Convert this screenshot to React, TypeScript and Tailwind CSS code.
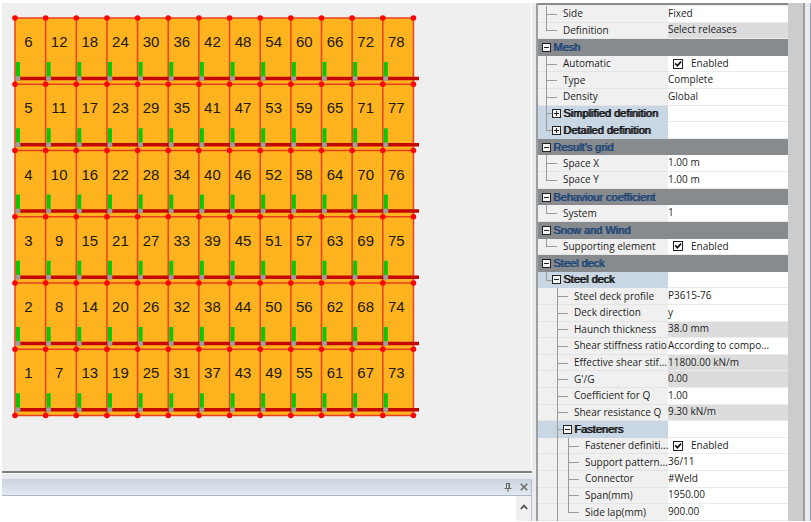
import React, { useState } from 'react';
import clsx from 'clsx';

type RowKind = 'section' | 'group' | 'item';

interface PropertyRow {
  kind: RowKind;
  level: number;
  label: string;
  value?: string;
  checkbox?: boolean;
  readOnly?: boolean;
  collapsed?: boolean;
  last?: boolean;
}

const rows: PropertyRow[] = [
  { kind: 'item', level: 1, label: 'Side', value: 'Fixed' },
  { kind: 'item', level: 1, label: 'Definition', value: 'Select releases', readOnly: true, last: true },
  { kind: 'section', level: 0, label: 'Mesh' },
  { kind: 'item', level: 1, label: 'Automatic', checkbox: true },
  { kind: 'item', level: 1, label: 'Type', value: 'Complete' },
  { kind: 'item', level: 1, label: 'Density', value: 'Global' },
  { kind: 'group', level: 1, label: 'Simplified definition', collapsed: true },
  { kind: 'group', level: 1, label: 'Detailed definition', collapsed: true, last: true },
  { kind: 'section', level: 0, label: "Result's grid" },
  { kind: 'item', level: 1, label: 'Space X', value: '1.00 m' },
  { kind: 'item', level: 1, label: 'Space Y', value: '1.00 m', last: true },
  { kind: 'section', level: 0, label: 'Behaviour coefficient' },
  { kind: 'item', level: 1, label: 'System', value: '1', last: true },
  { kind: 'section', level: 0, label: 'Snow and Wind' },
  { kind: 'item', level: 1, label: 'Supporting element', checkbox: true, last: true },
  { kind: 'section', level: 0, label: 'Steel deck' },
  { kind: 'group', level: 1, label: 'Steel deck', last: true },
  { kind: 'item', level: 2, label: 'Steel deck profile', value: 'P3615-76' },
  { kind: 'item', level: 2, label: 'Deck direction', value: 'y' },
  { kind: 'item', level: 2, label: 'Haunch thickness', value: '38.0 mm', readOnly: true },
  { kind: 'item', level: 2, label: 'Shear stiffness ratio', value: 'According to compo...' },
  { kind: 'item', level: 2, label: 'Effective shear stif...', value: '11800.00 kN/m', readOnly: true },
  { kind: 'item', level: 2, label: "G'/G", value: '0.00', readOnly: true },
  { kind: 'item', level: 2, label: 'Coefficient for Q', value: '1.00' },
  { kind: 'item', level: 2, label: 'Shear resistance Q', value: '9.30 kN/m', readOnly: true },
  { kind: 'group', level: 2, label: 'Fasteners' },
  { kind: 'item', level: 3, label: 'Fastener definiti...', checkbox: true },
  { kind: 'item', level: 3, label: 'Support pattern...', value: '36/11' },
  { kind: 'item', level: 3, label: 'Connector', value: '#Weld' },
  { kind: 'item', level: 3, label: 'Span(mm)', value: '1950.00' },
  { kind: 'item', level: 3, label: 'Side lap(mm)', value: '900.00', last: true },
];

const COLS = 13;
const ROWS = 6;
const CELL_W = 30.65;
const CELL_H = 66.25;

const range = (n: number) => Array.from({ length: n }, (_, i) => i);

const DeckPlan: React.FC = () => {
  const width = COLS * CELL_W;
  const height = ROWS * CELL_H;

  return (
    <svg viewBox="-4 -4 410 406" width="410" height="406" className="block">
      <rect width={width} height={height} fill="#ffb31f" />
      <g fill="none">
        {range(ROWS + 1).map((r) => (
          <path key={r} d={`M0 ${r * CELL_H}H${width}`} stroke="#e8401c" strokeWidth="1.6" />
        ))}
        {range(COLS + 1).map((c) => (
          <path key={c} d={`M${c * CELL_W} 0V${height}`} stroke="#ea4820" strokeWidth="1.6" />
        ))}
      </g>
      {range(ROWS).map((r) => (
        <path key={r} d={`M3 ${r * CELL_H + 60.5}H404`} stroke="#c40500" strokeWidth="3.4" />
      ))}
      {range(COLS).map((c) =>
        range(ROWS).map((r) => {
          const x = c * CELL_W;
          const y = r * CELL_H;
          return (
            <g key={`${c}-${r}`}>
              <rect x={x + 1} y={y + 44} width="4" height="15" fill="#0ac800" />
              <rect x={x + 0.4} y={y + 58} width="5" height="5" rx="1.8" fill="#a09c98" />
              <text
                x={x + 13.5}
                y={y + 29}
                textAnchor="middle"
                fill="#21180a"
                className="font-['Liberation_Sans',sans-serif] text-[15px]"
              >
                {c * ROWS + ROWS - r}
              </text>
            </g>
          );
        })
      )}
      {range(COLS + 1).map((c) =>
        range(ROWS + 1).map((r) => (
          <circle key={`${c}-${r}`} cx={c * CELL_W} cy={r * CELL_H} r="2.8" fill="#fb0505" />
        ))
      )}
    </svg>
  );
};

const Expander: React.FC<{ collapsed: boolean; onToggle: () => void; label: string }> = ({
  collapsed,
  onToggle,
  label,
}) => (
  <button type="button" aria-label={`Toggle ${label}`} onClick={onToggle} className="shrink-0">
    <svg viewBox="0 0 9 9" width="9" height="9" className="block">
      <rect x="0.5" y="0.5" width="8" height="8" fill="#f4f4f4" stroke="#222" />
      <path d={collapsed ? 'M2 4.5h5M4.5 2v5' : 'M2 4.5h5'} stroke="#222" />
    </svg>
  </button>
);

// Guide lines of the tree: a blank or passing column, or the branch that ends at the row's label
const Guide: React.FC<{ type: 'blank' | 'through' | 'item' | 'group'; last?: boolean }> = ({ type, last }) => {
  const branch = type === 'item' || type === 'group';
  return (
    <span
      className={clsx(
        '-mb-px flex shrink-0 flex-col self-stretch pl-2',
        type === 'item' && 'w-[19px]',
        type === 'group' && 'w-[14px]',
        !branch && 'w-[11px]'
      )}
    >
      <span
        className={clsx('flex-1 border-[#9b9b9b]', type !== 'blank' && 'border-l', branch && 'border-b')}
      />
      <span className={clsx('flex-1 border-[#9b9b9b]', type !== 'blank' && !last && 'border-l')} />
    </span>
  );
};

const EnabledBox: React.FC<{ label: string }> = ({ label }) => {
  const [checked, setChecked] = useState(true);
  return (
    <label className="flex items-center gap-2 pl-[5px]">
      <span className="grid">
        <input
          type="checkbox"
          aria-label={label}
          checked={checked}
          onChange={() => setChecked(!checked)}
          className="col-start-1 row-start-1 size-[10px] appearance-none border border-[#222] bg-white"
        />
        {checked && (
          <svg viewBox="0 0 10 10" className="pointer-events-none col-start-1 row-start-1 size-[10px]">
            <path d="M2.2 4.4l2.2 2.4 3.6-4.2" fill="none" stroke="#111" strokeWidth="1.7" />
          </svg>
        )}
      </span>
      Enabled
    </label>
  );
};

const boldText = "font-['Liberation_Sans',sans-serif] text-[11px] [text-shadow:1px_0_currentColor]";

const PropertyLine: React.FC<{ row: PropertyRow }> = ({ row }) => {
  const [collapsed, setCollapsed] = useState(!!row.collapsed);
  const toggle = () => setCollapsed(!collapsed);

  if (row.kind === 'section') {
    return (
      <tr className="flex min-h-4 flex-1 bg-[#878b8d]">
        <th colSpan={2} scope="colgroup" className="flex flex-1 items-center gap-[2px] pl-1 text-left font-normal">
          <Expander collapsed={collapsed} onToggle={toggle} label={row.label} />
          <span className={clsx(boldText, 'text-[#1d4678]')}>{row.label}</span>
        </th>
      </tr>
    );
  }

  const isGroup = row.kind === 'group';

  return (
    <tr className="flex min-h-4 flex-1">
      <th
        scope="row"
        className={clsx(
          'flex w-[130px] shrink-0 items-center border-b text-left font-normal',
          isGroup ? 'border-[#c9d6e3] bg-[#c9d6e3]' : 'border-[#e4e4e4] bg-[#f0f0f0]'
        )}
      >
        {range(row.level - 1).map((i) => (
          <Guide key={i} type={i > 0 ? 'through' : 'blank'} />
        ))}
        <Guide type={isGroup ? 'group' : 'item'} last={row.last} />
        {isGroup ? (
          <>
            <Expander collapsed={collapsed} onToggle={toggle} label={row.label} />
            <span className={clsx(boldText, 'pl-[2px] whitespace-nowrap text-[#111]')}>{row.label}</span>
          </>
        ) : (
          <span className="pl-[6px] whitespace-nowrap">{row.label}</span>
        )}
      </th>
      <td
        className={clsx(
          'flex min-w-0 flex-1 items-center border-b border-[#ececec]',
          row.readOnly ? 'bg-[#dcdcdc]' : 'bg-white'
        )}
      >
        {row.checkbox ? (
          <EnabledBox label={row.label} />
        ) : (
          <span className="pb-px whitespace-nowrap">{row.value}</span>
        )}
      </td>
    </tr>
  );
};

const OutputPane: React.FC = () => (
  <section className="mt-[5px] border-r border-[#b5bcc4]">
    <div className="flex h-[17px] items-center justify-end gap-2 border-b border-[#aeb6be] bg-gradient-to-b from-[#cbd4dd] to-[#e1eaf4] pr-[3px]">
      <button type="button" aria-label="Pin">
        <svg viewBox="0 0 8 9" width="8" height="9" fill="none" stroke="#6b6b6b">
          <path d="M2 .5h4M2.5 .5v4.5M5.5 .5v4.5M5 .5v4.5M.5 5.5h7M4 5.5v3.5" />
        </svg>
      </button>
      <button type="button" aria-label="Close">
        <svg viewBox="0 0 8 8" width="8" height="8" fill="none" stroke="#6b6b6b" strokeWidth="1.5">
          <path d="M.7.7l6.6 6.6M7.3.7L.7 7.3" />
        </svg>
      </button>
    </div>
    <div className="flex h-[25px] justify-end bg-white">
      <button type="button" aria-label="Scroll up" className="flex w-[15px] justify-center bg-[#f0f0f0] pt-2">
        <svg viewBox="0 0 8 6" width="8" height="6" fill="none" stroke="#505050" strokeWidth="1.8">
          <path d="M.8 5L4 1.6 7.2 5" />
        </svg>
      </button>
    </div>
  </section>
);

export default function App() {
  return (
    <div className="flex h-screen overflow-hidden bg-white pt-[3px] pb-px pl-[2px] font-['Open_Sans',sans-serif] text-[10px] leading-[15px] text-[#1c1c1c]">
      <main className="flex min-w-0 flex-1 flex-col bg-[#e8eaeb]">
        <div className="min-h-0 flex-1 overflow-hidden border-r border-white bg-[#efefef] pt-[11px] pl-[9px]">
          <DeckPlan />
        </div>
        <div className="h-[3px] border-b border-white bg-[#7d7d79]" />
        <OutputPane />
      </main>
      <aside className="flex w-[279px] shrink-0 border-r border-[#93a5b5] bg-[#e9ebed] pl-1">
        <div className="flex min-w-0 flex-1 border-r-2 border-l-2 border-[#9b9fa3]">
          <table className="flex min-w-0 flex-1 flex-col border-t-2 border-[#878b8d] pt-px">
            <tbody className="flex min-h-0 flex-1 flex-col">
              {rows.map((row, i) => (
                <PropertyLine key={i} row={row} />
              ))}
            </tbody>
          </table>
          <div className="w-[15px] bg-[#cccccc]" />
        </div>
        <div className="w-[5px]" />
      </aside>
    </div>
  );
}
